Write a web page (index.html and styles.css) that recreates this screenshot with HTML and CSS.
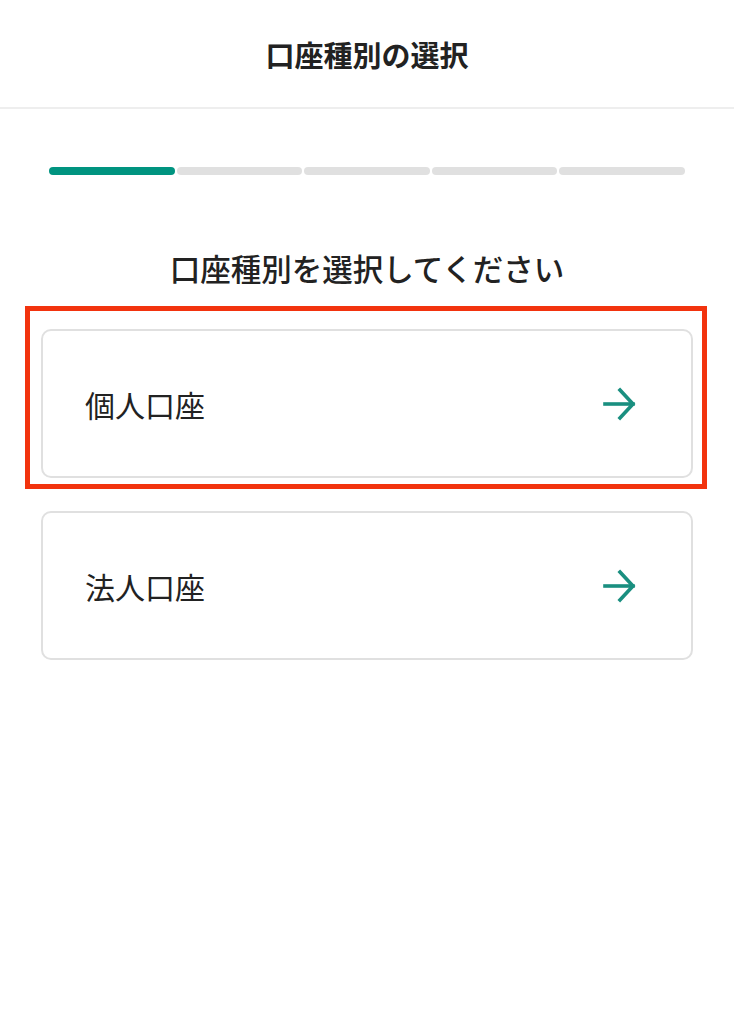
FILE: index.html
```html
<!DOCTYPE html>
<html lang="ja">
<head>
  <meta charset="UTF-8">
  <meta name="viewport" content="width=device-width, initial-scale=1.0">
  <title>口座種別の選択</title>
  <link rel="stylesheet" href="styles.css">
</head>
<body>
  <header class="header">
    <h1 class="header-title">口座種別の選択</h1>
  </header>

  <main class="content">
    <div class="progress">
      <div class="progress-step done"></div>
      <div class="progress-step"></div>
      <div class="progress-step"></div>
      <div class="progress-step"></div>
      <div class="progress-step"></div>
    </div>

    <h2 class="lead">口座種別を選択してください</h2>

    <div class="options">
      <a class="option highlighted" href="#">
        <span class="option-label">個人口座</span>
        <svg class="option-arrow" width="38" height="34" viewBox="0 0 38 34" fill="none" stroke="currentColor" stroke-width="3.6" stroke-linecap="square">
          <path d="M6 17 H34" />
          <path d="M21 3 L34 17 L21 31" stroke-linejoin="miter" />
        </svg>
      </a>
      <a class="option" href="#">
        <span class="option-label">法人口座</span>
        <svg class="option-arrow" width="38" height="34" viewBox="0 0 38 34" fill="none" stroke="currentColor" stroke-width="3.6" stroke-linecap="square">
          <path d="M6 17 H34" />
          <path d="M21 3 L34 17 L21 31" stroke-linejoin="miter" />
        </svg>
      </a>
    </div>
  </main>
</body>
</html>
```

FILE: styles.css
```css
body {
  margin: 0;
  padding: 0;
  background-color: #fff;
  color: #222;
  font-family: "Noto Sans CJK JP", "Noto Sans", sans-serif;
}

.header {
  height: 107px;
  display: flex;
  align-items: center;
  justify-content: center;
  border-bottom: 2px solid #eeeeee;
}

.header-title {
  margin: 0;
  font-size: 29px;
  font-weight: 700;
  color: #222;
}

.content {
  padding: 58px 41px 0;
}

.progress {
  display: flex;
  gap: 2px;
  margin: 0 8px;
}

.progress-step {
  flex: 1;
  height: 8px;
  border-radius: 4px;
  background-color: #e0e0e0;
}

.progress-step.done {
  background-color: #009480;
}

.lead {
  margin: 71px 0 39px;
  text-align: center;
  font-size: 30.5px;
  font-weight: 500;
  line-height: 44px;
  color: #222;
}

.options {
  display: flex;
  flex-direction: column;
  gap: 33px;
}

.option {
  position: relative;
  display: flex;
  align-items: center;
  justify-content: space-between;
  height: 149px;
  box-sizing: border-box;
  padding: 0 54px 0 42px;
  border: 2px solid #e0e0e0;
  border-radius: 10px;
  text-decoration: none;
  color: #222;
}

.option-label {
  font-size: 30px;
  font-weight: 400;
}

.option-arrow {
  color: #1a8f80;
}

/* annotation frame drawn over the first option */
.option.highlighted::after {
  content: "";
  position: absolute;
  top: -25px;
  left: -18px;
  right: -16px;
  bottom: -13px;
  border: 5px solid #f2330e;
  pointer-events: none;
}
```
